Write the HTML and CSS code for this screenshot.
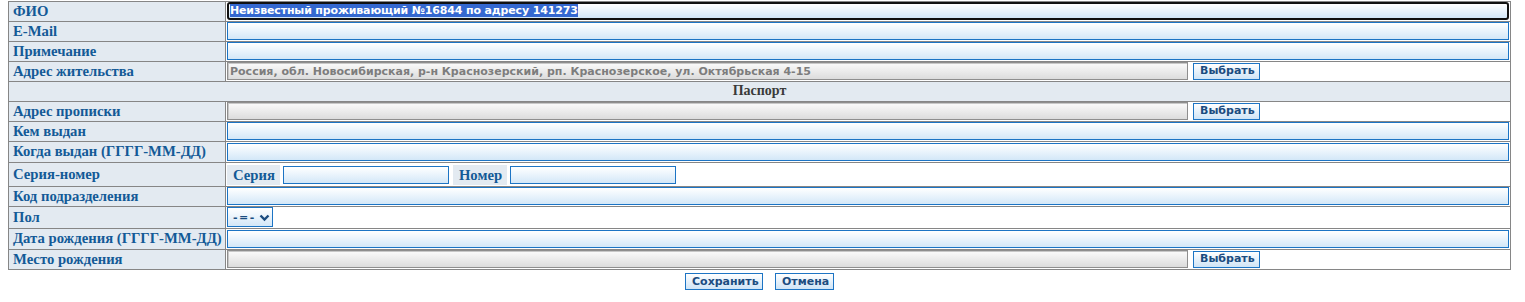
FILE: index.html
```html
<!DOCTYPE html>
<html lang="ru">

<head>
    <meta charset="UTF-8">
    <title>Жилец</title>
    <link rel="stylesheet" href="styles.css">
</head>

<body>
    <form id="personForm">
        <table class="grid">
            <colgroup>
                <col class="col-label">
                <col>
            </colgroup>
            <tr>
                <td class="lbl">ФИО</td>
                <td>
                    <div class="inp focused"><span class="sel">Неизвестный проживающий №16844 по адресу 141273</span></div>
                </td>
            </tr>
            <tr>
                <td class="lbl">E-Mail</td>
                <td><input type="text" class="inp" name="email"></td>
            </tr>
            <tr>
                <td class="lbl">Примечание</td>
                <td><input type="text" class="inp" name="note"></td>
            </tr>
            <tr>
                <td class="lbl">Адрес жительства</td>
                <td class="val">
                    <div class="pick">
                        <input type="text" class="inp ro" readonly value="Россия, обл. Новосибирская, р-н Краснозерский, рп. Краснозерское, ул. Октябрьская 4-15">
                        <button type="button" class="btn">Выбрать</button>
                    </div>
                </td>
            </tr>
            <tr>
                <td class="section" colspan="2">Паспорт</td>
            </tr>
            <tr>
                <td class="lbl">Адрес прописки</td>
                <td class="val">
                    <div class="pick">
                        <input type="text" class="inp ro" readonly>
                        <button type="button" class="btn">Выбрать</button>
                    </div>
                </td>
            </tr>
            <tr>
                <td class="lbl">Кем выдан</td>
                <td><input type="text" class="inp" name="issuer"></td>
            </tr>
            <tr>
                <td class="lbl tall">Когда выдан (ГГГГ-ММ-ДД)</td>
                <td><input type="text" class="inp" name="issued"></td>
            </tr>
            <tr>
                <td class="lbl">Серия-номер</td>
                <td class="val">
                    <div class="series">
                        <span class="sub">Серия</span>
                        <input type="text" class="inp short" name="series">
                        <span class="sub">Номер</span>
                        <input type="text" class="inp short" name="number">
                    </div>
                </td>
            </tr>
            <tr>
                <td class="lbl">Код подразделения</td>
                <td><input type="text" class="inp" name="dept"></td>
            </tr>
            <tr>
                <td class="lbl">Пол</td>
                <td class="val">
                    <select class="sex" name="sex">
                        <option>-=-</option>
                        <option>М</option>
                        <option>Ж</option>
                    </select>
                </td>
            </tr>
            <tr>
                <td class="lbl tall">Дата рождения (ГГГГ-ММ-ДД)</td>
                <td><input type="text" class="inp" name="birthday"></td>
            </tr>
            <tr>
                <td class="lbl">Место рождения</td>
                <td class="val">
                    <div class="pick">
                        <input type="text" class="inp ro" readonly>
                        <button type="button" class="btn">Выбрать</button>
                    </div>
                </td>
            </tr>
        </table>

        <div class="actions">
            <button type="submit" class="btn">Сохранить</button>
            <button type="button" class="btn">Отмена</button>
        </div>
    </form>
</body>

</html>
```

FILE: styles.css
```css
body {
    margin: 1px 0 0 8px;
    background: #fff;
    font-family: "Liberation Serif", "Times New Roman", serif;
}

.grid {
    width: 1503px;
    border-collapse: collapse;
    border: 1px solid #868686;
}

.grid td {
    border: 1px solid #868686;
    padding: 0 1px 1px;
    vertical-align: middle;
}

.col-label {
    width: 217px;
}

.lbl {
    background: #e3eaf1;
    color: #135a97;
    font-weight: bold;
    font-size: 14.7px;
    white-space: nowrap;
    padding-left: 4px !important;
    line-height: 17px;
}

.lbl.tall {
    line-height: 19px;
}

.section {
    background: #e3eaf1;
    text-align: center;
    font-weight: bold;
    font-size: 14px;
    color: #3a3a3a;
    line-height: 18px;
}

.val {
    background: #fff;
}

.inp {
    display: block;
    box-sizing: border-box;
    width: 100%;
    height: 18px;
    margin: 0;
    padding: 0 2px;
    border: 1px solid #1c74c4;
    background: linear-gradient(#ffffff, #d3e7f8);
    font-family: "DejaVu Sans", Verdana, sans-serif;
    font-size: 11px;
    font-weight: bold;
    color: #1b4a7a;
    outline: none;
}

.focused {
    border: 2px solid #111;
    border-radius: 3px;
    line-height: 14px;
    white-space: nowrap;
    overflow: hidden;
    padding: 0 0 0 1px;
}

.sel {
    background: #3468d0;
    color: #fff;
    letter-spacing: -0.15px;
}

.ro {
    border: 1px solid #8e8e8e;
    box-shadow: inset 1px 1px 0 #c8c8c8;
    background: linear-gradient(#fbfbfb, #dcdcdc);
    color: #7d7d7d;
}

.pick {
    display: flex;
    align-items: center;
    gap: 5px;
}

.pick .inp {
    width: 961px;
}

.btn {
    box-sizing: border-box;
    height: 17px;
    padding: 0 6px;
    margin: 0;
    border: 1px solid #1c74c4;
    background: linear-gradient(#ffffff, #cfe4f6);
    font-family: "DejaVu Sans", Verdana, sans-serif;
    font-size: 11px;
    font-weight: bold;
    color: #1b4c80;
    line-height: 14px;
    cursor: pointer;
}

.pick .btn {
    width: 67px;
}

.series {
    display: flex;
    align-items: center;
    gap: 3px;
    padding: 2px 0 0;
}

.sub {
    background: #e3eaf1;
    color: #135a97;
    font-weight: bold;
    font-size: 14.7px;
    line-height: 20px;
    padding: 0 5px 0 6px;
}

.series .inp.short {
    width: 166px;
}

.sub + .inp {
    margin-right: 1px;
}

.sex {
    display: block;
    box-sizing: border-box;
    width: 46px;
    height: 20px;
    margin: 0;
    padding: 0 0 0 5px;
    border: 1px solid #1c74c4;
    appearance: none;
    background: url("data:image/svg+xml;utf8,<svg xmlns='http://www.w3.org/2000/svg' width='11' height='8' viewBox='0 0 11 8'><path d='M1.5 1.5 L5.5 5.5 L9.5 1.5' fill='none' stroke='%231b4c80' stroke-width='2.4'/></svg>") no-repeat 31px 6px, linear-gradient(#ffffff, #d3e7f8);
    font-family: "DejaVu Sans", Verdana, sans-serif;
    font-size: 11px;
    font-weight: bold;
    letter-spacing: 1.5px;
    color: #1b4c80;
}

.actions {
    width: 1503px;
    display: flex;
    justify-content: center;
    gap: 12px;
    margin-top: 3px;
}

.actions .btn:first-child {
    width: 78px;
}

.actions .btn:last-child {
    width: 59px;
}
```
